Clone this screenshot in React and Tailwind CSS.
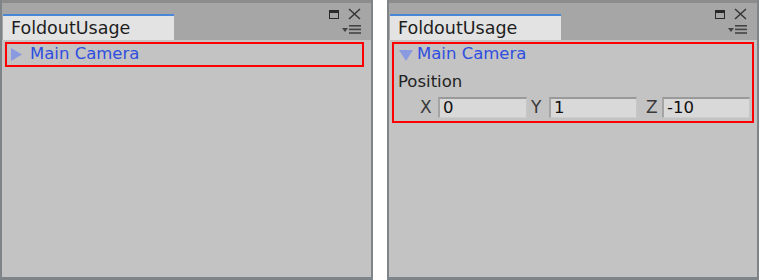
const font = { fontFamily: '"DejaVu Sans", Verdana, sans-serif' };

function HeaderIcons() {
  return (
    <div className="ml-auto mr-[10px] flex flex-col items-end pt-[5px]">
      <div className="flex items-center gap-[9px]">
        <svg width="10" height="9" viewBox="0 0 10 9">
          <rect x="0.5" y="0.5" width="9" height="8" fill="none" stroke="#2a2a2a" />
          <rect x="1" y="1" width="8" height="2" fill="#2a2a2a" />
        </svg>
        <svg width="13" height="12" viewBox="0 0 13 12">
          <path d="M1 1 L12 11 M12 1 L1 11" stroke="#333" strokeWidth="1.4" fill="none" />
        </svg>
      </div>
      <div className="mt-[5px] flex items-center gap-[1px]">
        <svg width="6" height="4" viewBox="0 0 6 4">
          <path d="M0 0 L6 0 L3 4 Z" fill="#444" />
        </svg>
        <svg width="12" height="9" viewBox="0 0 12 9">
          <rect x="0" y="0" width="12" height="1.6" fill="#444" />
          <rect x="0" y="3.6" width="12" height="1.6" fill="#444" />
          <rect x="0" y="7.2" width="12" height="1.6" fill="#444" />
        </svg>
      </div>
    </div>
  );
}

function Field({ label, value, labelW, fieldW, gap }) {
  return (
    <div className={`flex items-center ${gap}`}>
      <span className={`${labelW} text-[17px] leading-none text-[#3a3a3a]`}>{label}</span>
      <div className={`${fieldW} h-[21px] border-t-2 border-l-2 border-r border-b border-t-[#9a9a9a] border-l-[#a4a4a4] border-r-[#c6c6c6] border-b-[#cdcdcd] bg-[#d9d9d9] pl-[3px] text-[16.5px] leading-[18px] text-[#111]`}>
        {value}
      </div>
    </div>
  );
}

function Panel({ open, width }) {
  return (
    <div className={`flex h-[280px] flex-col border-x-2 border-b-[3px] border-[#7e8487] ${width}`} style={font}>
      <div className="flex h-[40px] border-t-[3px] border-[#8c8c8c] bg-[#a6a6a6]">
        <div className="ml-[1px] mt-[11px] flex h-[26px] w-[171px] items-center border-t-2 border-[#4a87d6] bg-[#e3e3e3] pl-[8px] text-[17.5px] text-[#1e1e1e]">
          FoldoutUsage
        </div>
        <HeaderIcons />
      </div>
      <div className="flex-1 bg-[#c3c3c3] px-[3px] pt-[2px]">
        {open ? (
          <div className="border-2 border-[#ff0000] pb-[3px] pl-[4px]">
            <div className="flex h-[21px] items-center gap-[4px] pl-[1px]">
              <svg width="14" height="12" viewBox="0 0 14 12">
                <path d="M0 1 L14 1 L7 12 Z" fill="#8a9ae0" />
              </svg>
              <span className="text-[16.5px] text-[#2f4ee0]">Main Camera</span>
            </div>
            <div className="mt-[7px] text-[16.5px] leading-[20px] text-[#222]">Position</div>
            <div className="mt-[5px] flex pl-[22px]">
              <Field label="X" value="0" labelW="w-[18px]" fieldW="w-[89px]" gap="mr-[4px]" />
              <Field label="Y" value="1" labelW="w-[18px]" fieldW="w-[88px]" gap="mr-[9px]" />
              <Field label="Z" value="-10" labelW="w-[16px]" fieldW="w-[88px]" gap="" />
            </div>
          </div>
        ) : (
          <div className="mr-[4px] flex h-[25px] items-center gap-[8px] border-2 border-[#ff0000] pl-[4px]">
            <svg width="11" height="13" viewBox="0 0 11 13">
              <path d="M0 0 L11 6.5 L0 13 Z" fill="#8a9ae0" />
            </svg>
            <span className="text-[16.5px] text-[#2f4ee0]">Main Camera</span>
          </div>
        )}
      </div>
    </div>
  );
}

export default function App() {
  return (
    <div className="flex h-[280px] w-[759px] gap-[14px] bg-white">
      <Panel open={false} width="w-[373px]" />
      <Panel open={true} width="w-[372px]" />
    </div>
  );
}
